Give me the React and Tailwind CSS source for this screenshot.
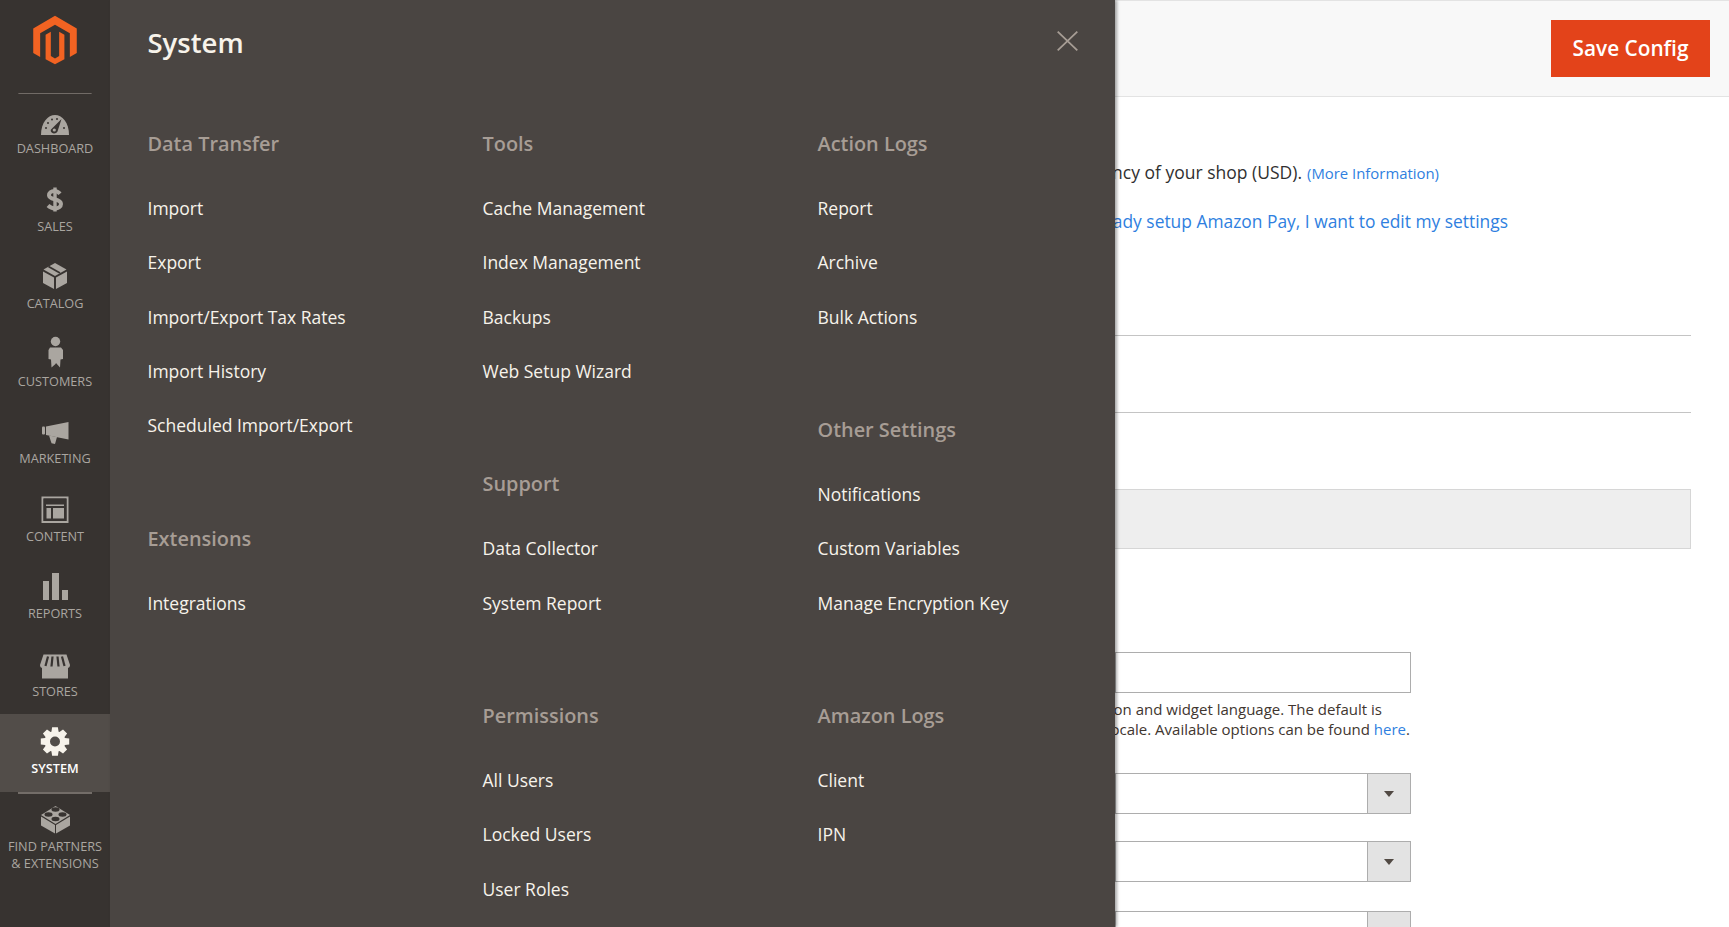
import React from "react";

function gearPath() {
  const cx = 25, cy = 19.5, teeth = 8, rO = 14.5, rI = 10.5;
  const pts = [];
  for (let i = 0; i < teeth; i++) {
    const a = (i * 2 * Math.PI) / teeth - Math.PI / 2;
    const w = 0.2, w2 = 0.3;
    [[rI, -w2 - 0.05], [rO, -w], [rO, w], [rI, w2 + 0.05]].forEach(([r, d]) => {
      pts.push(`${(cx + r * Math.cos(a + d)).toFixed(2)} ${(cy + r * Math.sin(a + d)).toFixed(2)}`);
    });
  }
  return `M${pts.join("L")}Z M${cx + 5} ${cy} A5 5 0 1 0 ${cx - 5} ${cy} A5 5 0 1 0 ${cx + 5} ${cy}Z`;
}

const D = "#373330";
const Ico = ({ children }) => (
  <svg width="50" height="38" viewBox="0 0 50 38" className="fill-current block shrink-0">
    {children}
  </svg>
);

const icons = {
  dashboard: (
    <Ico>
      <path d="M11 33C11 20 18 13 25 13C32 13 39 20 39 33Z" />
      <g fill={D}>
        <circle cx="16" cy="26" r="1" />
        <circle cx="18" cy="21" r="1" />
        <circle cx="22" cy="17.5" r="1" />
        <circle cx="27" cy="17" r="1" />
        <circle cx="34" cy="26" r="1" />
        <path d="M21 27.5L31.5 17L27.5 29.5C26.5 31.5 23.5 32 22 30.8C20.8 30 20.4 28.6 21 27.5Z" />
      </g>
      <circle cx="24.3" cy="28" r="1.6" />
    </Ico>
  ),
  sales: (
    <Ico>
      <rect x="23.3" y="7.5" width="3.4" height="24" />
      <path
        d="M30 13.8C28.5 12 26.5 11 24.5 11C21 11 19 13 19 15.2C19 20.5 31 18 31 24C31 26.5 28.5 28.4 25 28.4C22.5 28.4 20 27.4 18 25.5"
        className="fill-none stroke-current"
        strokeWidth="4"
      />
    </Ico>
  ),
  catalog: (
    <Ico>
      <path d="M13.5 12.5L25 6L36.5 12.5L25 19Z" />
      <path d="M13 14.5L24 20.5V32L13 26Z" />
      <path d="M26 20.5L37 14.5V26L26 32Z" />
      <path d="M18.5 9.5L30 16" stroke={D} strokeWidth="1.8" fill="none" />
    </Ico>
  ),
  customers: (
    <Ico>
      <circle cx="25.5" cy="6.5" r="4.7" />
      <path d="M20 12.5H31L33 15V24L30.5 24.5L30 32.5L26 28L25.5 29L21.5 32.5L21 24.5L18.5 24V15Z" />
    </Ico>
  ),
  marketing: (
    <Ico>
      <rect x="12" y="14.5" width="3" height="8" rx="1" />
      <path d="M16 14.5L38.5 10V27.5L16 23Z" />
      <path d="M19 23.5L27 25L25 32L21.5 31.3Z" />
    </Ico>
  ),
  content: (
    <Ico>
      <path fillRule="evenodd" d="M11.5 6.5H38.5V33H11.5ZM13.5 8.5V31H36.5V8.5Z" />
      <rect x="13.5" y="8.5" width="23" height="22.5" fill={D} />
      <rect x="16" y="14.5" width="18" height="1.5" />
      <rect x="16.5" y="18" width="4.5" height="10.5" />
      <rect x="23" y="18" width="11" height="10.5" />
    </Ico>
  ),
  reports: (
    <Ico>
      <rect x="13" y="14" width="6" height="19" />
      <rect x="22" y="6" width="7" height="27" />
      <rect x="32" y="23" width="6" height="10" />
    </Ico>
  ),
  stores: (
    <Ico>
      <path d="M13.5 9.5H36.5L40 20C40 22.5 38 23.5 36 22.5C35 24 32 24 31 22.5C30 24 27 24 25 22.5C23 24 20 24 19 22.5C18 24 15 24 14 22.5C12 23.5 10 22.5 10 20Z" />
      <rect x="12" y="22" width="26" height="11.5" />
      <g stroke={D} strokeWidth="2.2" fill="none">
        <path d="M18 11.5L15.5 21" />
        <path d="M22.5 11.5L21.5 21.5" />
        <path d="M27.5 11.5L28.5 21.5" />
        <path d="M32 11.5L34.5 21" />
      </g>
    </Ico>
  ),
  system: (
    <Ico>
      <path fillRule="evenodd" d={gearPath()} />
    </Ico>
  ),
  partners: (
    <Ico>
      <path d="M11 15L25.5 6L40 15L25.5 24Z" />
      <path d="M11 16.5L25 25V33.5L11 25.5Z" />
      <path d="M26 25L40 16.5V25.5L26 33.5Z" />
      <g fill={D}>
        <ellipse cx="25.5" cy="9.5" rx="4" ry="2.2" />
        <ellipse cx="18.5" cy="14.5" rx="4" ry="2.2" />
        <ellipse cx="32.5" cy="14.5" rx="4" ry="2.2" />
        <ellipse cx="25.5" cy="19" rx="4" ry="2.2" />
      </g>
    </Ico>
  ),
};

const nav = [
  ["dashboard", ["Dashboard"]],
  ["sales", ["Sales"]],
  ["catalog", ["Catalog"]],
  ["customers", ["Customers"]],
  ["marketing", ["Marketing"]],
  ["content", ["Content"]],
  ["reports", ["Reports"]],
  ["stores", ["Stores"]],
  ["system", ["System"]],
  ["partners", ["Find Partners", "& Extensions"]],
];

const columns = [
  {
    gap: "gap-[72.6px]",
    groups: [
      ["Data Transfer", ["Import", "Export", "Import/Export Tax Rates", "Import History", "Scheduled Import/Export"]],
      ["Extensions", ["Integrations"]],
    ],
  },
  {
    gap: "gap-[72px]",
    groups: [
      ["Tools", ["Cache Management", "Index Management", "Backups", "Web Setup Wizard"]],
      ["Support", ["Data Collector", "System Report"]],
      ["Permissions", ["All Users", "Locked Users", "User Roles"]],
    ],
  },
  {
    gap: "gap-[72px]",
    groups: [
      ["Action Logs", ["Report", "Archive", "Bulk Actions"]],
      ["Other Settings", ["Notifications", "Custom Variables", "Manage Encryption Key"]],
      ["Amazon Logs", ["Client", "IPN"]],
    ],
  },
];

const Select = ({ className }) => (
  <div className={`flex justify-end w-[296px] h-[41px] shrink-0 bg-white border border-[#adadad] ${className}`}>
    <div className="w-[43px] bg-[#e3e3e3] border-l border-[#adadad] flex items-center justify-center">
      <svg width="10" height="6" viewBox="0 0 10 6" className="fill-[#514943]">
        <path d="M0 0H10L5 6Z" />
      </svg>
    </div>
  </div>
);

export default function App() {
  return (
    <div className="flex w-[1729px] h-[927px] overflow-hidden bg-white font-['Open_Sans',sans-serif]">
      <aside className="w-[110px] shrink-0 bg-[#373330] text-[#aaa6a0] flex flex-col items-stretch">
        <div className="h-[94px] shrink-0 relative flex flex-col items-center">
          <svg width="110" height="95" viewBox="0 0 110 95" className="block">
            <path
              fill="#f26322"
              d="M55 16L77 28.7V53.5L70 57.5V33.5L55 25L40 33.5V57.5L33 53.5V28.7Z"
            />
            <path fill="#f26322" d="M55 65L45.5 59.8V35.2L50.8 32V56.5L55 59L59.2 56.5V32L64.5 35.2V59.8Z" />
            <rect x="18" y="94" width="74" height="1" fill="#736d68" />
          </svg>
        </div>
        {nav.map(([key, lines]) => {
          const active = key === "system";
          return (
            <div
              key={key}
              className={`relative h-[77.5px] shrink-0 flex flex-col items-center pt-2 ${
                active ? "bg-[#524d49] text-[#f7f3eb]" : ""
              }`}
            >
              {icons[key]}
              <span
                className={`shrink-0 text-[12.7px] leading-[17px] uppercase text-center whitespace-nowrap ${
                  active ? "font-semibold text-white" : ""
                }`}
              >
                {lines.map((l) => (
                  <span key={l} className="block">
                    {l}
                  </span>
                ))}
              </span>
              {active && <div className="absolute left-[18px] right-[18px] -bottom-[2px] h-[2px] bg-[#736d68]" />}
            </div>
          );
        })}
      </aside>

      <section className="w-[1005px] shrink-0 bg-[#4a4542] relative z-10 shadow-[2px_0_3px_rgba(0,0,0,0.35)] pl-[37.5px] pr-[37px]">
        <header className="flex items-start justify-between pt-[23px] h-[130px]">
          <h1 className="text-[27.5px] leading-[40px] font-semibold text-[#f7f3eb]">System</h1>
          <svg width="21" height="20" viewBox="0 0 21 20" className="mt-[8px] stroke-[#a79d95] fill-none">
            <path d="M0.7 0.7L20.3 19.3M20.3 0.7L0.7 19.3" strokeWidth="1.8" />
          </svg>
        </header>
        <div className="grid grid-cols-[335px_335px_295px]">
          {columns.map((col, i) => (
            <div key={i} className={`flex flex-col ${col.gap}`}>
              {col.groups.map(([title, links]) => (
                <div key={title}>
                  <h2 className="text-[19.9px] leading-[28px] font-semibold text-[#a79d95] mb-[23px]">{title}</h2>
                  <ul>
                    {links.map((l) => (
                      <li key={l} className="h-[54.3px] flex items-center text-[17.5px] leading-[26px] text-[#f7f3eb]">
                        {l}
                      </li>
                    ))}
                  </ul>
                </div>
              ))}
            </div>
          ))}
        </div>
      </section>

      <main className="flex-1 min-w-0 overflow-hidden flex flex-col text-[#303030]">
        <div className="h-[97px] shrink-0 bg-[#f8f8f8] border-y border-[#e3e3e3] flex items-start justify-end pr-[19px] pt-[19px]">
          <button className="w-[159px] h-[57px] pt-px bg-[#e3431a] text-white text-[20.8px] font-semibold">Save Config</button>
        </div>
        <div className="pr-[38px] flex flex-col items-start">
          <div className="w-[324px] h-[24px] mt-[63px] flex justify-end items-baseline whitespace-nowrap text-[17.5px] leading-[24px]">
            <span>Use the base currency of your shop (USD).</span>
            <span className="text-[14.9px] text-[#2f7fe0] ml-[5px]">(More Information)</span>
          </div>
          <div className="w-[393px] mt-[25px] flex justify-end whitespace-nowrap text-[17.4px] leading-[24px] text-[#2f7fe0]">
            I've already setup Amazon Pay, I want to edit my settings
          </div>
          <div className="w-full h-px bg-[#c4c4c4] mt-[102px]" />
          <div className="w-full h-px bg-[#c4c4c4] mt-[76px]" />
          <div className="w-full h-[60px] bg-[#eeeeee] border border-l-0 border-[#d6d6d6] mt-[76px]" />
          <div className="w-[296px] h-[41px] bg-white border border-[#adadad] mt-[103px]" />
          <div className="w-[267px] mt-[6px] flex justify-end whitespace-nowrap text-[15px] leading-[20px] text-[#41362f]">
            Choose the button and widget language. The default is
          </div>
          <div className="w-[295px] flex justify-end whitespace-nowrap text-[15px] leading-[20px] text-[#41362f]">
            <span>
              your Store locale. Available options can be found <span className="text-[#2f7fe0]">here</span>.
            </span>
          </div>
          <Select className="mt-[34px]" />
          <Select className="mt-[27px]" />
          <Select className="mt-[29px]" />
        </div>
      </main>
    </div>
  );
}
